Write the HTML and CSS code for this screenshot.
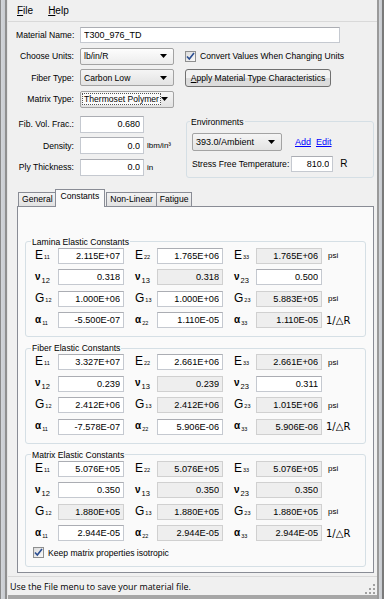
FILE: index.html
```html
<!DOCTYPE html>
<html lang="en">
<head>
    <meta charset="UTF-8">
    <meta name="viewport" content="width=device-width, initial-scale=1.0">
    <title>Material Editor</title>
    <link rel="stylesheet" href="styles.css">
</head>
<body>
<div class="window">
    <div class="frame-left"></div>
    <div class="client">
        <div class="menubar">
            <span class="menu"><u>F</u>ile</span>
            <span class="menu"><u>H</u>elp</span>
        </div>

        <div class="props">
            <span class="lbl">Material Name:</span>
            <input class="text name-box" type="text" value="T300_976_TD">

            <span class="lbl">Choose Units:</span>
            <div class="combo light"><span>lb/in/R</span><svg width="7" height="4" viewBox="0 0 7 4"><path d="M0 0h7L3.5 4z"/></svg></div>
            <div class="check-line"><span class="checkbox"><svg width="9" height="9" viewBox="0 0 9 9"><path d="M1 4.5l2.3 2.5L8 1" fill="none" stroke="#2b4e91" stroke-width="1.6"/></svg></span>Convert Values When Changing Units</div>

            <span class="lbl">Fiber Type:</span>
            <div class="combo"><span>Carbon Low</span><svg width="7" height="4" viewBox="0 0 7 4"><path d="M0 0h7L3.5 4z"/></svg></div>
            <button class="btn" type="button"><u>A</u>pply Material Type Characteristics</button>

            <span class="lbl">Matrix Type:</span>
            <div class="combo"><span class="focus">Thermoset Polymer</span><svg width="7" height="4" viewBox="0 0 7 4"><path d="M0 0h7L3.5 4z"/></svg></div>
        </div>

        <div class="lower">
            <div class="fields">
                <span class="lbl">Fib. Vol. Frac.:</span>
                <input class="text num" type="text" value="0.680">
                <span></span>

                <span class="lbl">Density:</span>
                <input class="text num" type="text" value="0.0">
                <span class="unit">lbm/in³</span>

                <span class="lbl">Ply Thickness:</span>
                <input class="text num" type="text" value="0.0">
                <span class="unit">in</span>
            </div>

            <fieldset class="env">
                <legend>Environments</legend>
                <div class="env-row">
                    <div class="combo env-combo"><span>393.0/Ambient</span><svg width="7" height="4" viewBox="0 0 7 4"><path d="M0 0h7L3.5 4z"/></svg></div>
                    <a class="link" href="#">Add</a>
                    <a class="link" href="#">Edit</a>
                </div>
                <div class="env-row">
                    <span class="nowrap">Stress Free Temperature:</span>
                    <input class="text num temp" type="text" value="810.0">
                    <span class="unit-r">R</span>
                </div>
            </fieldset>
        </div>

        <div class="tabstrip">
            <span class="tab">General</span>
            <span class="tab active">Constants</span>
            <span class="tab">Non-Linear</span>
            <span class="tab">Fatigue</span>
        </div>

        <div class="panel">
            <fieldset class="group">
                <legend>Lamina Elastic Constants</legend>
                <div class="consts">
                    <span class="sym">E<sub>11</sub></span><input class="val" value="2.115E+07">
                    <span class="sym">E<sub>22</sub></span><input class="val" value="1.765E+06">
                    <span class="sym">E<sub>33</sub></span><input class="val ro" value="1.765E+06" readonly>
                    <span class="psi">psi</span>

                    <span class="sym nu">ν<sub>12</sub></span><input class="val" value="0.318">
                    <span class="sym nu">ν<sub>13</sub></span><input class="val ro" value="0.318" readonly>
                    <span class="sym nu">ν<sub>23</sub></span><input class="val" value="0.500">
                    <span></span>

                    <span class="sym">G<sub>12</sub></span><input class="val" value="1.000E+06">
                    <span class="sym">G<sub>13</sub></span><input class="val" value="1.000E+06">
                    <span class="sym">G<sub>23</sub></span><input class="val ro" value="5.883E+05" readonly>
                    <span class="psi">psi</span>

                    <span class="sym al">α<sub>11</sub></span><input class="val" value="-5.500E-07">
                    <span class="sym al">α<sub>22</sub></span><input class="val" value="1.110E-05">
                    <span class="sym al">α<sub>33</sub></span><input class="val ro" value="1.110E-05" readonly>
                    <span class="cte">1/△R</span>
                </div>
            </fieldset>

            <fieldset class="group">
                <legend>Fiber Elastic Constants</legend>
                <div class="consts">
                    <span class="sym">E<sub>11</sub></span><input class="val" value="3.327E+07">
                    <span class="sym">E<sub>22</sub></span><input class="val" value="2.661E+06">
                    <span class="sym">E<sub>33</sub></span><input class="val ro" value="2.661E+06" readonly>
                    <span class="psi">psi</span>

                    <span class="sym nu">ν<sub>12</sub></span><input class="val" value="0.239">
                    <span class="sym nu">ν<sub>13</sub></span><input class="val ro" value="0.239" readonly>
                    <span class="sym nu">ν<sub>23</sub></span><input class="val" value="0.311">
                    <span></span>

                    <span class="sym">G<sub>12</sub></span><input class="val" value="2.412E+06">
                    <span class="sym">G<sub>13</sub></span><input class="val ro" value="2.412E+06" readonly>
                    <span class="sym">G<sub>23</sub></span><input class="val ro" value="1.015E+06" readonly>
                    <span class="psi">psi</span>

                    <span class="sym al">α<sub>11</sub></span><input class="val" value="-7.578E-07">
                    <span class="sym al">α<sub>22</sub></span><input class="val" value="5.906E-06">
                    <span class="sym al">α<sub>33</sub></span><input class="val ro" value="5.906E-06" readonly>
                    <span class="cte">1/△R</span>
                </div>
            </fieldset>

            <fieldset class="group">
                <legend>Matrix Elastic Constants</legend>
                <div class="consts">
                    <span class="sym">E<sub>11</sub></span><input class="val" value="5.076E+05">
                    <span class="sym">E<sub>22</sub></span><input class="val ro" value="5.076E+05" readonly>
                    <span class="sym">E<sub>33</sub></span><input class="val ro" value="5.076E+05" readonly>
                    <span class="psi">psi</span>

                    <span class="sym nu">ν<sub>12</sub></span><input class="val" value="0.350">
                    <span class="sym nu">ν<sub>13</sub></span><input class="val ro" value="0.350" readonly>
                    <span class="sym nu">ν<sub>23</sub></span><input class="val ro" value="0.350" readonly>
                    <span></span>

                    <span class="sym">G<sub>12</sub></span><input class="val ro" value="1.880E+05" readonly>
                    <span class="sym">G<sub>13</sub></span><input class="val ro" value="1.880E+05" readonly>
                    <span class="sym">G<sub>23</sub></span><input class="val ro" value="1.880E+05" readonly>
                    <span class="psi">psi</span>

                    <span class="sym al">α<sub>11</sub></span><input class="val" value="2.944E-05">
                    <span class="sym al">α<sub>22</sub></span><input class="val ro" value="2.944E-05" readonly>
                    <span class="sym al">α<sub>33</sub></span><input class="val ro" value="2.944E-05" readonly>
                    <span class="cte">1/△R</span>
                </div>
                <div class="check-line iso"><span class="checkbox"><svg width="9" height="9" viewBox="0 0 9 9"><path d="M1 4.5l2.3 2.5L8 1" fill="none" stroke="#2b4e91" stroke-width="1.6"/></svg></span>Keep matrix properties isotropic</div>
            </fieldset>
        </div>

        <div class="statusbar">
            <span>Use the File menu to save your material file.</span>
            <svg class="grip" width="10" height="10" viewBox="0 0 10 10" fill="#a0a0a0"><rect x="8" y="0" width="2" height="2"/><rect x="4" y="4" width="2" height="2"/><rect x="8" y="4" width="2" height="2"/><rect x="0" y="8" width="2" height="2"/><rect x="4" y="8" width="2" height="2"/><rect x="8" y="8" width="2" height="2"/></svg>
        </div>
    </div>
    <div class="frame-right"></div>
</div>
</body>
</html>
```

FILE: styles.css
```css
body {
    margin: 0;
    font-family: "Liberation Sans", Arial, sans-serif;
    font-size: 8.6px;
    color: #000;
    background: #f0f0f0;
}
.window {
    display: flex;
    height: 599px;
}
.frame-left {
    width: 8px;
    background: linear-gradient(to right, #8a8a8a 0, #8a8a8a 1px, #d3d6da 1px, #c7cacf 5px, #8f8f8f 5px, #8f8f8f 7px, #e6e6e6 7px);
}
.frame-right {
    width: 7px;
    background: linear-gradient(to right, #9a9a9a 0, #9a9a9a 2px, #d3d6da 2px, #c7cacf 5px, #7a7a7a 5px);
}
.client {
    flex: 1;
    min-width: 0;
    display: flex;
    flex-direction: column;
    border-bottom: 4px solid #a6a6a6;
}
.nowrap {
    white-space: nowrap;
}

/* menu */
.menubar {
    height: 22px;
    display: flex;
    align-items: center;
    gap: 15px;
    padding-left: 9px;
    border-bottom: 1px solid #d9d9d9;
    font-size: 10px;
}

/* material properties */
.props {
    display: grid;
    grid-template-columns: 58px 94px auto;
    grid-auto-rows: 17px;
    column-gap: 6px;
    row-gap: 4.5px;
    align-items: center;
    padding: 4px 0 0 8px;
}
.lbl {
    text-align: right;
    white-space: nowrap;
}
.text {
    box-sizing: border-box;
    height: 16px;
    margin: 0;
    padding: 0 3px;
    border: 1px solid #c5c9d0;
    border-top-color: #abadb3;
    background: #fff;
    font-family: "Liberation Sans", sans-serif;
    font-size: 9px;
    color: #000;
}
.num {
    text-align: right;
}
.name-box {
    grid-column: 2 / 4;
    width: 260px;
    font-size: 9px;
}
.combo {
    box-sizing: border-box;
    height: 17px;
    display: flex;
    align-items: center;
    justify-content: space-between;
    padding: 0 6px 0 3px;
    border: 1px solid #a3a3a3;
    border-radius: 2px;
    background: linear-gradient(#f5f5f5, #e3e3e3);
    white-space: nowrap;
}
.combo.light {
    background: linear-gradient(#fdfdfd, #ececec);
}
.combo svg {
    fill: #000;
    flex-shrink: 0;
}
.combo .focus {
    border: 1px dotted #555;
    padding: 0 1px;
    margin-left: -2px;
    background: #fbfbfb;
}
.check-line {
    display: flex;
    align-items: center;
    gap: 4px;
    margin-left: 5px;
    white-space: nowrap;
}
.checkbox {
    box-sizing: border-box;
    width: 11px;
    height: 11px;
    display: flex;
    align-items: center;
    justify-content: center;
    border: 1px solid #8e8f8f;
    background: linear-gradient(135deg, #dcdcdc, #fafafa);
}
.btn {
    justify-self: start;
    margin-left: 5px;
    width: 146px;
    height: 18px;
    padding: 0;
    border: 1px solid #707070;
    border-radius: 3px;
    background: linear-gradient(#f2f2f2 50%, #dcdcdc 50%);
    font: inherit;
    color: #000;
    white-space: nowrap;
}

.lower {
    display: flex;
    align-items: flex-start;
    margin-top: 8px;
}
.fields {
    width: 170px;
    display: grid;
    grid-template-columns: 58px 64px auto;
    grid-auto-rows: 17px;
    column-gap: 6px;
    row-gap: 4.5px;
    align-items: center;
    padding-left: 8px;
    box-sizing: border-box;
}
.fields .text {
    height: 17px;
}
.unit {
    margin-left: -3px;
    font-size: 8px;
}
.env {
    box-sizing: border-box;
    width: 188px;
    height: 62px;
    margin: 0 0 0 8px;
    padding: 0 0 0 5px;
    border: 1px solid #d5dfe5;
    border-radius: 3px;
}
.env legend {
    padding: 0 1px;
    margin-left: -2px;
    line-height: 12px;
}
.env-row {
    display: flex;
    align-items: center;
    margin-top: 5px;
}
.env-combo {
    width: 90px;
    height: 18px;
    margin-right: 13px;
    font-size: 9px;
}
.link {
    color: #0000ff;
    margin-right: 5px;
    font-size: 9px;
}
.temp {
    width: 42px;
    margin-left: 2px;
}
.unit-r {
    margin-left: 7px;
    font-size: 10px;
}

/* tabs */
.tabstrip {
    display: flex;
    align-items: flex-end;
    height: 16px;
    margin-top: 12px;
    padding-left: 10px;
}
.tab {
    box-sizing: border-box;
    height: 14px;
    padding: 0 3px;
    line-height: 13px;
    border: 1px solid #898c95;
    border-bottom: none;
    background: linear-gradient(#f2f2f2, #e2e2e2);
    margin-right: -1px;
    white-space: nowrap;
}
.tab.active {
    position: relative;
    z-index: 1;
    height: 18px;
    padding: 0 5px;
    margin: 0 1px -1px -1px;
    line-height: 13px;
    background: #fafafa;
}
.panel {
    flex: 1;
    margin: 0 3px 0 9px;
    padding: 29px 7px 0 7px;
    border: 1px solid #898c95;
    background: #fafafa;
}
.group {
    margin: 0 0 5px 0;
    padding: 0 0 8px 7px;
    border: 1px solid #d5dfe5;
    border-radius: 3px;
}
.group legend {
    padding: 0 1px;
    margin-left: -2px;
    line-height: 12px;
}
.consts {
    display: grid;
    grid-template-columns: 25px 66px 33px 66px 33px 66px auto;
    grid-auto-rows: 16px;
    row-gap: 5.5px;
    align-items: center;
}
.sym {
    padding-left: 2px;
    font-size: 12px;
    line-height: 16px;
    white-space: nowrap;
}
.consts .sym:nth-child(7n+3),
.consts .sym:nth-child(7n+5) {
    padding-left: 11px;
}
.sym sub {
    font-size: 5.5px;
    vertical-align: baseline;
    margin-left: 1px;
}
.sym.nu,
.sym.al {
    font-size: 10px;
    font-weight: bold;
}
.sym.nu sub {
    font-size: 7.5px;
    font-weight: normal;
    position: relative;
    top: 3px;
}
.sym.al sub {
    font-size: 5.5px;
    font-weight: normal;
    position: relative;
    top: 2px;
}
.val {
    box-sizing: border-box;
    width: 66px;
    height: 16px;
    margin: 0;
    padding: 0 3px;
    border: 1px solid #c5c9d0;
    border-top-color: #abadb3;
    background: #fff;
    font-family: "Liberation Sans", sans-serif;
    font-size: 9.2px;
    text-align: right;
    color: #000;
}
.val.ro {
    border-color: #d0d0d0;
    background: #eeeeee;
}
.psi {
    padding-left: 6px;
    font-size: 8px;
}
.cte {
    padding-left: 4px;
    font-family: "DejaVu Sans", sans-serif;
    font-size: 10px;
    white-space: nowrap;
}
.iso {
    margin: 6px 0 0 0;
}

/* status */
.statusbar {
    height: 18px;
    margin-top: 3px;
    display: flex;
    align-items: center;
    justify-content: space-between;
    padding: 0 2px 0 2px;
    border-top: 1px solid #d9d9d9;
    font-family: "Open Sans", sans-serif;
    font-size: 8.9px;
}
.grip {
    align-self: flex-end;
    margin-bottom: 1px;
}
```
